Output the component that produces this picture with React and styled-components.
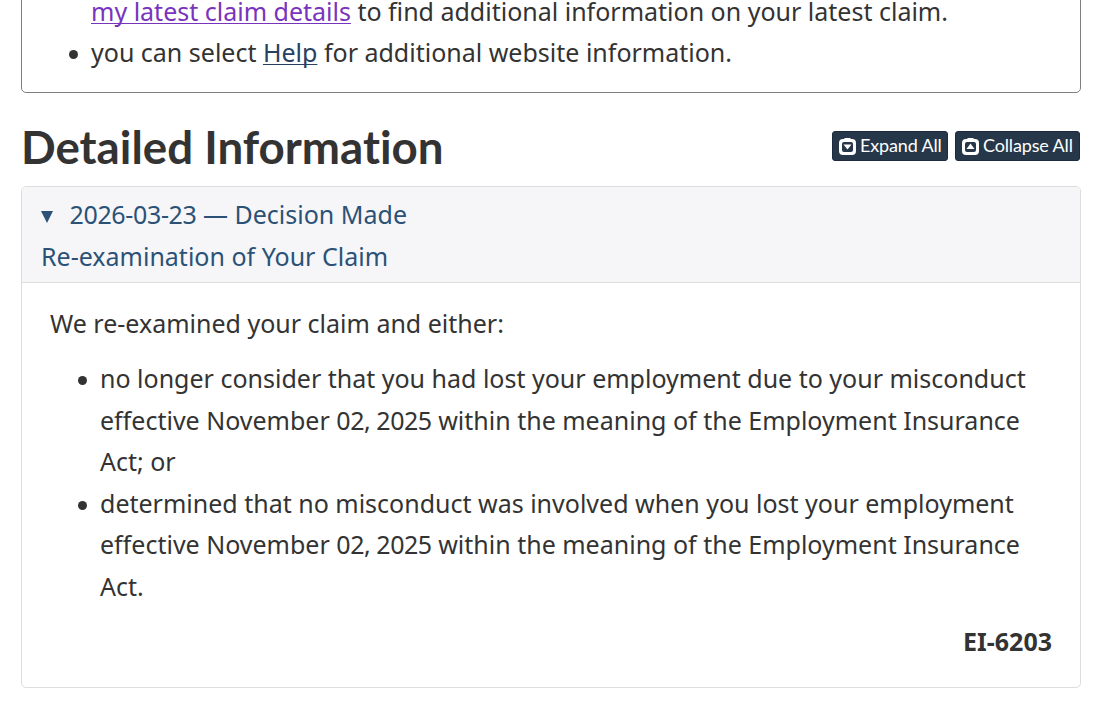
import React, { useState } from 'react';
import styled, { createGlobalStyle } from 'styled-components';

const GlobalStyle = createGlobalStyle`
  html, body {
    margin: 0;
    padding: 0;
    overflow: hidden;
    background: #fff;
  }

  body {
    font-family: 'Noto Sans', sans-serif;
    font-size: 25px;
    line-height: 41.5px;
    color: #333;
  }

  *, *::before, *::after {
    box-sizing: border-box;
  }
`;

const Page = styled.main`
  height: 707px;
  padding: 0 21px;
  overflow: hidden;
`;

const Notice = styled.section`
  height: 103px;
  margin-top: -10px;
  border: 1px solid #7f7f7f;
  border-radius: 5px;
  line-height: 41px;
`;

const BulletList = styled.ul`
  margin: 0;
  padding: 0 0 0 ${({ $indent }) => $indent}px;
  list-style: none;
`;

const Item = styled.li`
  &::before {
    content: '';
    display: ${({ $continued }) => ($continued ? 'none' : 'inline-block')};
    width: 9px;
    height: 9px;
    margin: 0 13px 0 -22px;
    border-radius: 50%;
    background: #333;
    vertical-align: 3px;
  }
`;

const Link = styled.a`
  color: ${({ $visited }) => ($visited ? '#7834bc' : '#284162')};
  text-decoration: underline;
  text-decoration-thickness: 1px;
  text-underline-offset: 2px;
  text-decoration-skip-ink: none;
  cursor: pointer;
`;

const SectionHeader = styled.div`
  display: flex;
  justify-content: space-between;
  height: 93px;
`;

const Heading = styled.h2`
  margin: 26px 0 0;
  font-family: Lato, sans-serif;
  font-size: 45.7px;
  font-weight: 700;
  font-variant-ligatures: none;
  line-height: 56px;
`;

const ButtonGroup = styled.div`
  display: flex;
  gap: 7px;
  margin: 38px 1px 0 0;
`;

const ToggleButton = styled.button`
  display: flex;
  align-items: center;
  gap: 4px;
  width: ${({ $width }) => $width}px;
  height: 30px;
  padding: 0 0 1px 7px;
  border: 1px solid #1d2b3c;
  border-radius: 3px;
  background: #26374a;
  color: #fff;
  font-family: Lato, sans-serif;
  font-size: 18px;
  letter-spacing: -0.15px;
  line-height: 27px;
  white-space: nowrap;
  cursor: pointer;
`;

const ButtonIcon = styled.svg`
  flex: none;
  width: 17px;
  height: 17px;
  margin: 1px 0 0 -1px;
`;

const Panel = styled.section`
  border: 1px solid #ddd;
  border-radius: 5px;
  overflow: hidden;
`;

const Summary = styled.div`
  height: 95px;
  padding: 7px 19px 0;
  background: #f6f6f9;
  color: #2b5276;
  cursor: pointer;
`;

const SummaryLine = styled.div`
  display: flex;
  align-items: center;
  height: 42px;
  white-space: pre;
`;

const Arrow = styled.svg`
  width: 12px;
  height: 12px;
  margin: 3px 16.5px 0 0;
`;

const Digits = styled.span`
  letter-spacing: ${({ $tight }) => ($tight ? -0.45 : -0.35)}px;
`;

const PanelBody = styled.div`
  height: 405px;
  padding: 20px 28px 0;
  border-top: 1px solid #ddd;
`;

const Paragraph = styled.p`
  margin: 0 0 13.5px;
`;

const Code = styled.p`
  margin: 13.5px 0 0;
  font-weight: 700;
  text-align: right;
`;

const ToggleIcon = ({ up }) => (
  <ButtonIcon viewBox="0 0 17 17" aria-hidden="true">
    <path
      fill="#fff"
      fillRule="evenodd"
      d="M4 1H5Q5.4 0 6.5 0H10.5Q11.6 0 12 1H13Q17 1 17 5V13Q17 17 13 17H4Q0 17 0 13V5Q0 1 4 1ZM5 4Q3 4 3 6V12Q3 14 5 14H12Q14 14 14 12V6Q14 4 12 4Z"
    />
    <path fill="#fff" d={up ? 'M8.5 5.5L12.5 11H4.5Z' : 'M4.5 6.5H12.5L8.5 11.5Z'} />
  </ButtonIcon>
);

const App = () => {
  const [open, setOpen] = useState(true);

  return (
    <>
      <GlobalStyle />
      <Page>
        <Notice>
          <BulletList $indent={69}>
            <Item $continued>
              <Link $visited>my latest claim details</Link> to find additional information on your latest claim.
            </Item>
            <Item>
              you can select <Link>Help</Link> for additional website information.
            </Item>
          </BulletList>
        </Notice>

        <SectionHeader>
          <Heading>Detailed Information</Heading>
          <ButtonGroup>
            <ToggleButton $width={116} onClick={() => setOpen(true)}>
              <ToggleIcon />
              Expand All
            </ToggleButton>
            <ToggleButton $width={125} onClick={() => setOpen(false)}>
              <ToggleIcon up />
              Collapse All
            </ToggleButton>
          </ButtonGroup>
        </SectionHeader>

        <Panel>
          <Summary onClick={() => setOpen(!open)}>
            <SummaryLine>
              <Arrow viewBox="0 0 12 12" aria-hidden="true">
                <path fill="currentColor" d={open ? 'M0 0H12L6 12Z' : 'M0 0L12 6L0 12Z'} />
              </Arrow>
              <Digits>2026-03-23</Digits>
              <span> — Decision Made</span>
            </SummaryLine>
            <SummaryLine>Re-examination of Your Claim</SummaryLine>
          </Summary>
          {open && (
            <PanelBody>
              <Paragraph>We re-examined your claim and either:</Paragraph>
              <BulletList $indent={50}>
                <Item>
                  no longer consider that you had lost your employment due to your misconduct
                  effective November <Digits $tight>02, 2025</Digits> within the meaning of the Employment Insurance
                  Act; or
                </Item>
                <Item>
                  determined that no misconduct was involved when you lost your employment
                  effective November <Digits $tight>02, 2025</Digits> within the meaning of the Employment Insurance
                  Act.
                </Item>
              </BulletList>
              <Code>EI-6203</Code>
            </PanelBody>
          )}
        </Panel>
      </Page>
    </>
  );
};

export default App;
